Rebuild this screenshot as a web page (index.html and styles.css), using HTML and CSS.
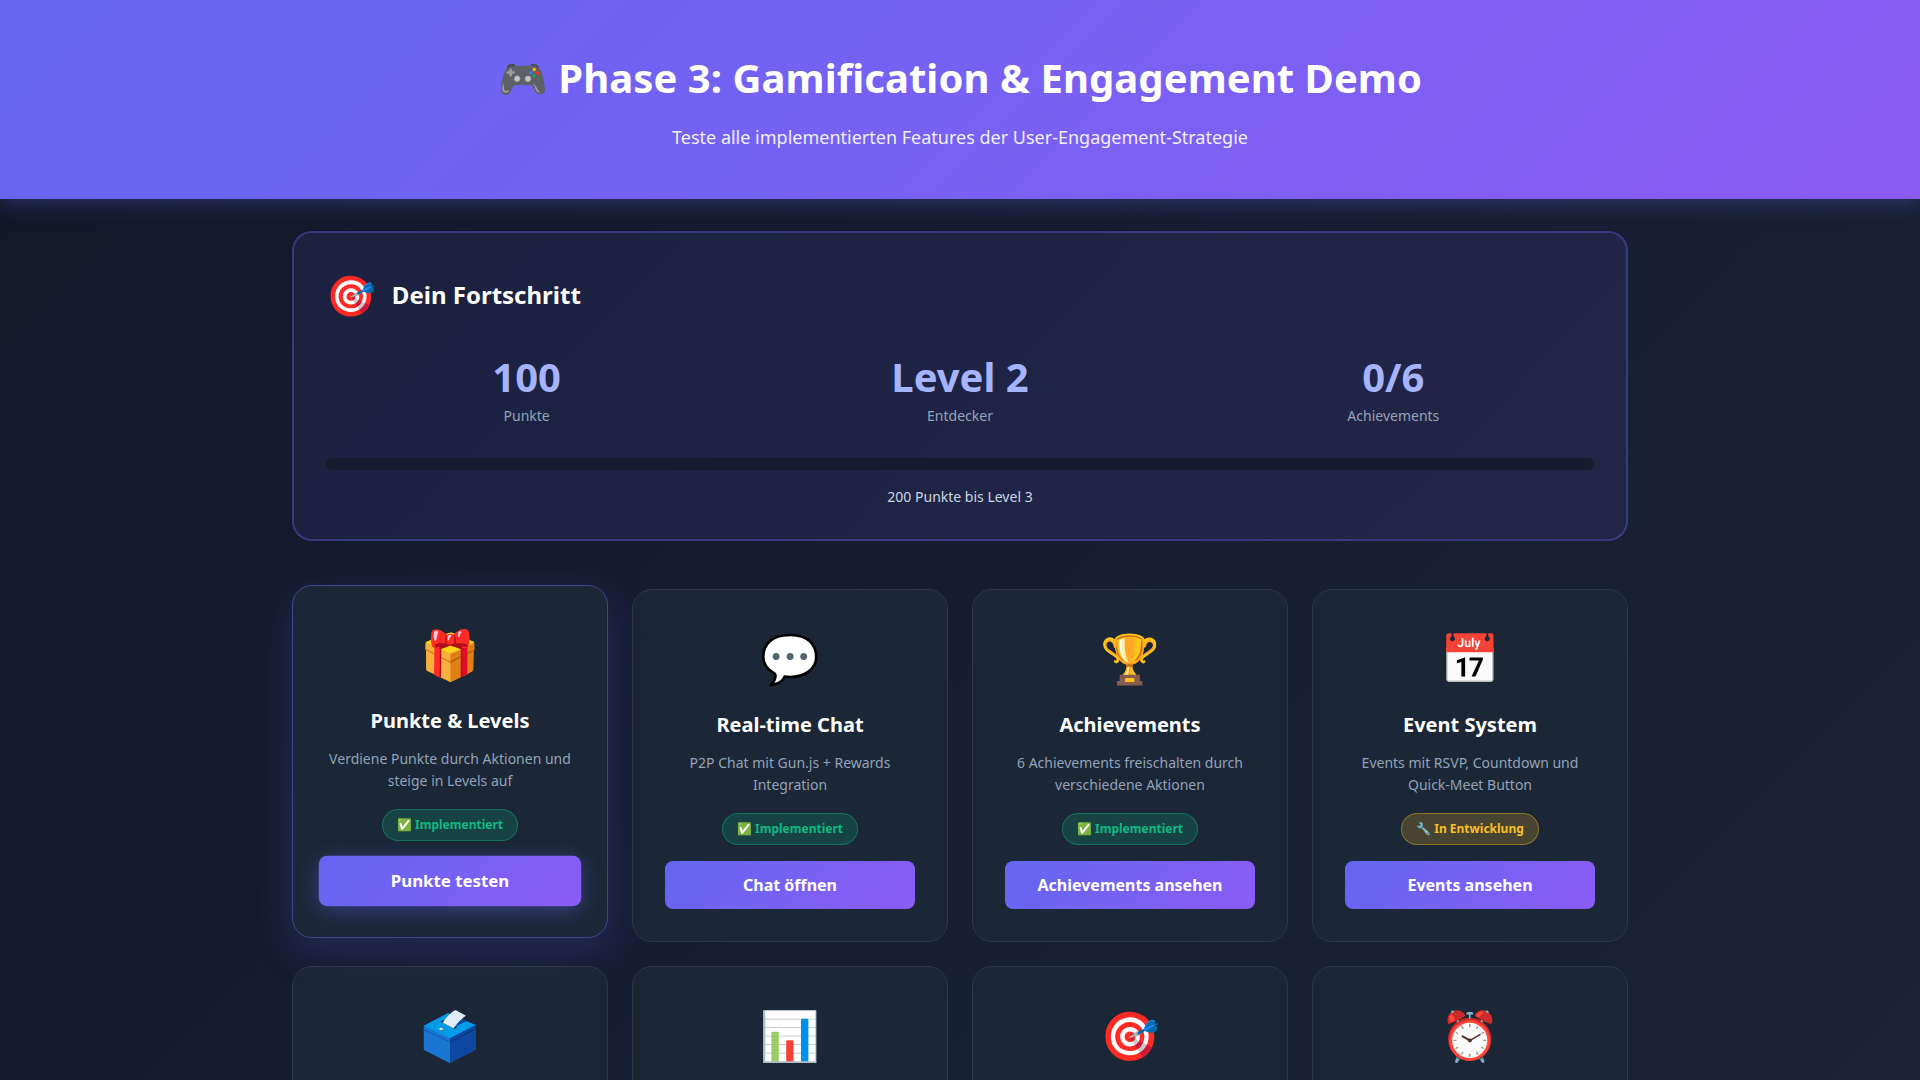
FILE: index.html
```html
<!DOCTYPE html>
<html lang="de">
<head>
<meta charset="utf-8">
<title>Phase 3: Gamification &amp; Engagement Demo</title>
<link rel="stylesheet" href="styles.css">
</head>
<body>
<header class="hero">
  <h1>🎮 Phase 3: Gamification &amp; Engagement Demo</h1>
  <p>Teste alle implementierten Features der User-Engagement-Strategie</p>
</header>
<main class="container">
  <section class="progress-card">
    <div class="progress-head"><span class="progress-icon">🎯</span><h2>Dein Fortschritt</h2></div>
    <div class="stats">
      <div class="stat"><div class="stat-value">100</div><div class="stat-label">Punkte</div></div>
      <div class="stat"><div class="stat-value">Level 2</div><div class="stat-label">Entdecker</div></div>
      <div class="stat"><div class="stat-value">0/6</div><div class="stat-label">Achievements</div></div>
    </div>
    <div class="bar"></div>
    <div class="bar-text">200 Punkte bis Level 3</div>
  </section>
  <section class="grid">
    <article class="card card-active">
      <div class="card-icon">🎁</div>
      <h3>Punkte &amp; Levels</h3>
      <p>Verdiene Punkte durch Aktionen und steige in Levels auf</p>
      <span class="badge badge-done">✅ Implementiert</span>
      <button class="btn btn-active">Punkte testen</button>
    </article>
    <article class="card">
      <div class="card-icon">💬</div>
      <h3>Real-time Chat</h3>
      <p>P2P Chat mit Gun.js + Rewards Integration</p>
      <span class="badge badge-done">✅ Implementiert</span>
      <button class="btn">Chat öffnen</button>
    </article>
    <article class="card">
      <div class="card-icon">🏆</div>
      <h3>Achievements</h3>
      <p>6 Achievements freischalten durch verschiedene Aktionen</p>
      <span class="badge badge-done">✅ Implementiert</span>
      <button class="btn">Achievements ansehen</button>
    </article>
    <article class="card">
      <div class="card-icon">📅</div>
      <h3>Event System</h3>
      <p>Events mit RSVP, Countdown und Quick-Meet Button</p>
      <span class="badge badge-dev">🔧 In Entwicklung</span>
      <button class="btn">Events ansehen</button>
    </article>
    <article class="card"><div class="card-icon">🗳️</div></article>
    <article class="card"><div class="card-icon">📊</div></article>
    <article class="card"><div class="card-icon">🎯</div></article>
    <article class="card"><div class="card-icon">⏰</div></article>
  </section>
</main>
</body>
</html>
```
FILE: styles.css
```css
* { box-sizing: border-box; margin: 0; padding: 0; }
html, body { min-height: 100%; }
body {
  font-family: "Noto Sans", "Noto Color Emoji", sans-serif;
  background: linear-gradient(135deg, #111827 0%, #161d33 50%, #1a2434 100%);
  background-attachment: fixed;
  color: #f1f5f9;
  line-height: 1.6;
}
.hero {
  height: 199px;
  padding: 48px 32px;
  text-align: center;
  color: #fff;
  background: linear-gradient(135deg, #6366f1 0%, #8b5cf6 100%);
  box-shadow: 0 4px 20px rgba(99, 102, 241, 0.3);
}
.hero h1 { font-size: 40px; font-weight: 700; letter-spacing: 0.06px; line-height: 60px; margin-bottom: 15px; }
.hero p { font-size: 18px; line-height: 28px; opacity: 0.9; }
.container { max-width: 1400px; margin: 0 auto; padding: 32px; }
.progress-card {
  height: 310px;
  padding: 32px;
  margin-bottom: 48px;
  border: 2px solid rgba(99, 102, 241, 0.35);
  border-radius: 20px;
  background: linear-gradient(135deg, rgba(99, 102, 241, 0.1) 0%, rgba(139, 92, 246, 0.1) 100%);
}
.progress-head { display: flex; align-items: center; gap: 16px; margin-bottom: 28px; }
.progress-icon { font-size: 40px; line-height: 60px; }
.progress-head h2 { font-size: 24px; font-weight: 700; color: #fff; }
.stats { display: grid; grid-template-columns: repeat(3, 1fr); gap: 32px; margin-bottom: 31px; text-align: center; }
.stat-value { font-size: 40px; font-weight: 700; line-height: 1.2; color: #a5b4fc; }
.stat-label { font-size: 14px; line-height: 22px; margin-top: 4px; color: #94a3b8; }
.bar { height: 12px; border-radius: 6px; background: #151c30; margin-bottom: 16px; }
.bar-text { font-size: 14px; line-height: 22px; text-align: center; color: #cbd5e1; }
.grid { display: grid; grid-template-columns: repeat(4, 1fr); grid-auto-rows: 353px; gap: 24px; }
.card {
  display: flex;
  flex-direction: column;
  align-items: center;
  padding: 32px;
  text-align: center;
  background: #1b2636;
  border: 1px solid #2c3749;
  border-radius: 20px;
}
.card-active {
  transform: translateY(-4px);
  border-color: #3f4590;
  box-shadow: 0 12px 40px rgba(99, 102, 241, 0.2);
}
.card-icon { font-size: 48px; line-height: 72px; margin-bottom: 16px; }
.card h3 { font-size: 20px; font-weight: 700; line-height: 30px; color: #fff; margin-bottom: 12px; }
.card p { font-size: 14px; line-height: 22px; color: #94a3b8; margin-bottom: 17px; }
.badge { font-size: 12px; font-weight: 700; line-height: 20px; padding: 5px 14px; border-radius: 20px; margin-bottom: 16px; border: 1px solid; }
.badge-done { color: #10b981; background: rgba(16, 185, 129, 0.2); border-color: rgba(16, 185, 129, 0.4); }
.badge-dev { color: #fbbf24; background: rgba(251, 191, 36, 0.2); border-color: rgba(251, 191, 36, 0.4); }
.btn {
  width: 100%;
  height: 48px;
  flex: none;
  border: 0;
  border-radius: 8px;
  font-family: inherit;
  font-size: 16px;
  font-weight: 700;
  color: #fff;
  background: linear-gradient(135deg, #6366f1 0%, #8b5cf6 100%);
}
.btn-active { transform: scale(1.05); box-shadow: 0 4px 20px rgba(99, 102, 241, 0.4); }
```
